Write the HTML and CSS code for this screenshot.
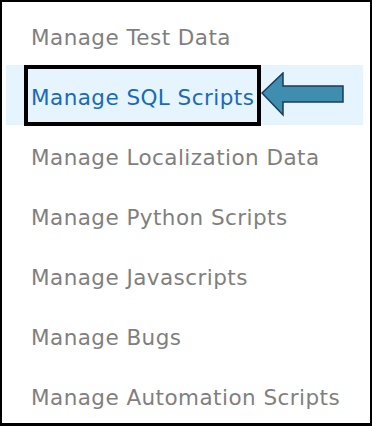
FILE: index.html
```html
<!DOCTYPE html>
<html lang="en">
<head>
    <meta charset="UTF-8">
    <meta name="viewport" content="width=device-width, initial-scale=1.0">
    <title>Manage Menu</title>
    <link rel="stylesheet" href="styles.css">
</head>
<body>
    <div class="frame">
        <ul class="menu">
            <li class="menu-item"><a href="#">Manage Test Data</a></li>
            <li class="menu-item active">
                <span class="callout-box"><a href="#">Manage SQL Scripts</a></span>
                <svg class="callout-arrow" width="84" height="46" viewBox="0 0 84 46">
                    <path d="M1 21 L22 1 L22 14 L82 14 L82 30 L22 30 L22 43 Z" fill="#3f8daf" stroke="#1c3a5e" stroke-width="1.5" stroke-linejoin="miter"/>
                </svg>
            </li>
            <li class="menu-item"><a href="#">Manage Localization Data</a></li>
            <li class="menu-item"><a href="#">Manage Python Scripts</a></li>
            <li class="menu-item"><a href="#">Manage Javascripts</a></li>
            <li class="menu-item"><a href="#">Manage Bugs</a></li>
            <li class="menu-item"><a href="#">Manage Automation Scripts</a></li>
        </ul>
    </div>
</body>
</html>
```

FILE: styles.css
```css
html, body {
    margin: 0;
    padding: 0;
    background-color: white;
}
.frame {
    box-sizing: border-box;
    width: 372px;
    height: 426px;
    border: 2px solid black;
    border-bottom-width: 3px;
    background-color: white;
    overflow: hidden;
}
.menu {
    list-style: none;
    margin: 0;
    padding: 3px 7px 0 4px;
    font-family: "DejaVu Sans", sans-serif;
    font-size: 21.5px;
    letter-spacing: 0.45px;
}
.menu-item {
    display: flex;
    align-items: center;
    height: 60px;
    padding-left: 25px;
}
.menu-item a {
    padding-top: 4px;
    color: #7f7f7f;
    text-decoration: none;
    white-space: nowrap;
}
.menu-item.active {
    background-color: #e5f4fd;
    padding-left: 18px;
}
.menu-item.active a {
    color: #1b69b8;
}
.callout-box {
    box-sizing: border-box;
    display: flex;
    align-items: center;
    width: 237px;
    height: 61px;
    margin-top: 1px;
    padding-left: 3px;
    border: 4px solid black;
}
.callout-arrow {
    display: block;
    margin-left: 0;
    margin-top: -1px;
}
```
